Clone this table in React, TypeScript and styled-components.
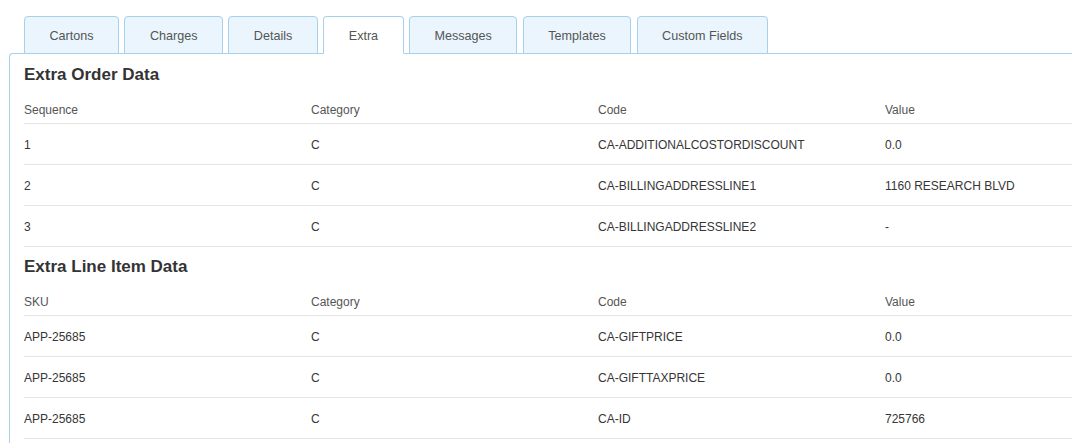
import React from "react";
import styled, { createGlobalStyle } from "styled-components";

const Global = createGlobalStyle`
  html, body { margin: 0; padding: 0; background: #ffffff; }
  body { font-family: "Liberation Sans", Arial, Helvetica, sans-serif; overflow: hidden; }
`;

const Page = styled.div`
  width: 1072px;
  height: 443px;
  overflow: hidden;
  padding: 16px 0 0 9px;
  box-sizing: border-box;
`;

const TabBar = styled.div`
  display: flex;
  gap: 5.6px;
  margin-left: 15px;
  position: relative;
  z-index: 1;
  margin-bottom: -1px;
`;

const Tab = styled.div<{ $active?: boolean }>`
  height: 38px;
  box-sizing: border-box;
  padding: 1px 24.4px 0;
  display: flex;
  align-items: center;
  justify-content: center;
  font-size: 12.6px;
  color: #555555;
  background: ${(p) => (p.$active ? "#ffffff" : "#eaf5fd")};
  border: 1px solid #a6d0ec;
  border-bottom-color: ${(p) => (p.$active ? "#ffffff" : "#a6d0ec")};
  border-radius: 4px 4px 0 0;
`;

const Panel = styled.div`
  border: 1px solid #a6d0ec;
  border-right: none;
  border-bottom: none;
  border-top-left-radius: 4px;
  padding: 11px 0 0 14px;
  height: 420px;
  overflow: hidden;
`;

const Heading = styled.h3`
  margin: 0 0 10px 0;
  font-size: 17px;
  line-height: 20px;
  font-weight: bold;
  color: #333333;
`;

const Table = styled.table`
  width: 1148px;
  table-layout: fixed;
  border-collapse: collapse;
  margin-bottom: 10px;
  font-size: 12px;
`;

const HeadCell = styled.th`
  text-align: left;
  font-weight: normal;
  color: #555555;
  padding: 7px 0 5px;
  line-height: 16px;
  border-bottom: 1px solid #e6e6e6;
`;

const Cell = styled.td`
  text-align: left;
  color: #363636;
  height: 41px;
  padding: 2px 0 0 0;
  box-sizing: border-box;
  line-height: 16px;
  border-bottom: 1px solid #e6e6e6;
`;

const tabs = ["Cartons", "Charges", "Details", "Extra", "Messages", "Templates", "Custom Fields"];

const orderRows = [
  ["1", "C", "CA-ADDITIONALCOSTORDISCOUNT", "0.0"],
  ["2", "C", "CA-BILLINGADDRESSLINE1", "1160 RESEARCH BLVD"],
  ["3", "C", "CA-BILLINGADDRESSLINE2", "-"],
];

const lineRows = [
  ["APP-25685", "C", "CA-GIFTPRICE", "0.0"],
  ["APP-25685", "C", "CA-GIFTTAXPRICE", "0.0"],
  ["APP-25685", "C", "CA-ID", "725766"],
];

function DataTable({ headers, rows }: { headers: string[]; rows: string[][] }) {
  return (
    <Table>
      <colgroup>
        <col style={{ width: 287 }} />
        <col style={{ width: 287 }} />
        <col style={{ width: 287 }} />
        <col style={{ width: 287 }} />
      </colgroup>
      <thead>
        <tr>
          {headers.map((h) => (
            <HeadCell key={h}>{h}</HeadCell>
          ))}
        </tr>
      </thead>
      <tbody>
        {rows.map((r, i) => (
          <tr key={i}>
            {r.map((c, j) => (
              <Cell key={j}>{c}</Cell>
            ))}
          </tr>
        ))}
      </tbody>
    </Table>
  );
}

export default function App() {
  return (
    <>
      <Global />
      <Page>
        <TabBar>
          {tabs.map((t) => (
            <Tab key={t} $active={t === "Extra"}>
              {t}
            </Tab>
          ))}
        </TabBar>
        <Panel>
          <Heading>Extra Order Data</Heading>
          <DataTable headers={["Sequence", "Category", "Code", "Value"]} rows={orderRows} />
          <Heading>Extra Line Item Data</Heading>
          <DataTable headers={["SKU", "Category", "Code", "Value"]} rows={lineRows} />
        </Panel>
      </Page>
    </>
  );
}
